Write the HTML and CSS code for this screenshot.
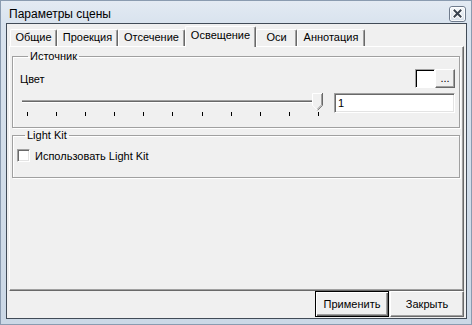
FILE: index.html
```html
<!DOCTYPE html>
<html>
<head>
<meta charset="utf-8">
<link rel="stylesheet" href="styles.css">
</head>
<body>
<div class="window">
  <div class="titlebar">
    <span class="title">Параметры сцены</span>
    <span class="close">
      <svg width="17" height="16" viewBox="0 0 17 16">
        <defs>
          <linearGradient id="cg" x1="0" y1="0" x2="0" y2="1">
            <stop offset="0" stop-color="#f4f7fb"/>
            <stop offset="1" stop-color="#d3dce8"/>
          </linearGradient>
        </defs>
        <rect x="0.5" y="0.5" width="16" height="15" rx="2.5" fill="url(#cg)" stroke="#6f7b8c"/>
        <rect x="1.5" y="1.5" width="14" height="13" rx="1.5" fill="none" stroke="#ffffff" stroke-opacity="0.8"/>
        <path d="M5.5 4.5 L11.5 10.5 M11.5 4.5 L5.5 10.5" stroke="#ffffff" stroke-width="4" stroke-linecap="square"/>
        <path d="M5.5 4.5 L11.5 10.5 M11.5 4.5 L5.5 10.5" stroke="#3a4350" stroke-width="2" stroke-linecap="square"/>
      </svg>
    </span>
  </div>
  <div class="client">
    <div class="tabstrip">
      <div class="tab w1">Общие</div>
      <div class="tab w2">Проекция</div>
      <div class="tab w3">Отсечение</div>
      <div class="tab w4 active">Освещение</div>
      <div class="tab w5">Оси</div>
      <div class="tab w6">Аннотация</div>
    </div>
    <div class="panel">
      <fieldset class="group source">
        <legend>Источник</legend>
        <div class="color-row">
          <span class="label">Цвет</span>
          <span class="picker">
            <span class="swatch"></span>
            <span class="dots">...</span>
          </span>
        </div>
        <div class="slider-row">
          <div class="slider">
            <div class="track"></div>
            <div class="ticks">
              <i></i><i></i><i></i><i></i><i></i><i></i><i></i><i></i><i></i><i></i><i></i>
            </div>
            <svg class="thumb" width="11" height="18" viewBox="0 0 11 18">
              <path d="M0 0 H11 V12 L5.5 17.5 L0 12 Z" fill="#f0f0f0"/>
              <path d="M0.5 12.5 V0.5 H10" stroke="#ffffff" fill="none"/>
              <path d="M10.5 0 V12.3 L5.5 17.3" stroke="#696969" fill="none"/>
              <path d="M9.5 1 V11.9 L5.5 15.9" stroke="#a0a0a0" fill="none"/>
              <path d="M0.5 12.3 L5 16.8" stroke="#ffffff" fill="none"/>
            </svg>
          </div>
          <div class="edit">1</div>
        </div>
      </fieldset>
      <fieldset class="group kit">
        <legend>Light Kit</legend>
        <label class="check"><span class="box"></span>Использовать Light Kit</label>
      </fieldset>
    </div>
    <div class="buttons">
      <span class="btn default">Применить</span>
      <span class="btn">Закрыть</span>
    </div>
  </div>
</div>
</body>
</html>
```
FILE: styles.css
```css
html, body {
  margin: 0;
  padding: 0;
}
body {
  width: 472px;
  height: 325px;
  font: 11px "Liberation Sans", Arial, sans-serif;
  color: #000;
  overflow: hidden;
}
.window {
  box-sizing: border-box;
  width: 472px;
  height: 325px;
  border: 1px solid #8a9bb0;
  background: linear-gradient(to bottom, #e3eaf3 0px, #d9e3ee 22px, #cbd8e6 100%);
  display: flex;
  flex-direction: column;
  padding: 0 4px 5px 5px;
}
.titlebar {
  height: 22px;
  display: flex;
  justify-content: space-between;
  align-items: flex-start;
}
.title {
  font-size: 12px;
  line-height: 14px;
  margin: 6px 0 0 3px;
  color: #000;
}
.close {
  display: block;
  width: 17px;
  height: 16px;
  margin: 5px 1px 0 0;
}
.close svg { display: block; }
.client {
  flex: 1;
  border: 1px solid #414b57;
  background: #f0f0f0;
  display: flex;
  flex-direction: column;
  padding: 0 2px 0 2px;
}
.tabstrip {
  height: 22px;
  display: flex;
  align-items: flex-end;
  padding-left: 1px;
  position: relative;
  z-index: 1;
}
.tab {
  box-sizing: border-box;
  height: 17px;
  border-top: 1px solid #fff;
  border-left: 1px solid #fff;
  border-right: 1px solid #696969;
  box-shadow: inset -1px 0 0 #a0a0a0;
  border-radius: 2px 2px 0 0;
  text-align: center;
  line-height: 15px;
  background: #f0f0f0;
}
.tab.active {
  height: 21px;
  margin-bottom: -1px;
  line-height: 17px;
}
.w1 { width: 47px; }
.w2 { width: 61px; }
.w3 { width: 67px; }
.w4 { width: 71px; }
.w5 { width: 41px; }
.w6 { width: 68px; }
.panel {
  box-sizing: border-box;
  height: 245px;
  border-top: 1px solid #fff;
  border-left: 1px solid #fff;
  border-right: 1px solid #696969;
  border-bottom: 1px solid #696969;
  box-shadow: inset -1px -1px 0 #a0a0a0;
  padding: 3px 3px 0 2px;
}
.group {
  margin: 0;
  padding: 0 4px 0 7px;
  border: 1px solid #a0a0a0;
  box-shadow: inset 1px 1px 0 #fff, 1px 1px 0 #fff;
  min-width: 0;
}
.group legend {
  margin-left: 8px;
  padding: 0 2px;
  line-height: 13px;
}
.source { padding-bottom: 14px; }
.color-row {
  display: flex;
  justify-content: space-between;
  align-items: center;
  margin-top: 6px;
  height: 19px;
}
.picker { display: flex; }
.swatch {
  box-sizing: border-box;
  width: 20px;
  height: 19px;
  background: #fff;
  border-top: 1px solid #a0a0a0;
  border-left: 1px solid #a0a0a0;
  border-right: 1px solid #fff;
  border-bottom: 1px solid #fff;
  box-shadow: inset 1px 1px 0 #000;
}
.dots {
  box-sizing: border-box;
  width: 20px;
  height: 19px;
  border-top: 1px solid #fff;
  border-left: 1px solid #fff;
  border-right: 1px solid #696969;
  border-bottom: 1px solid #696969;
  box-shadow: inset -1px -1px 0 #a0a0a0;
  text-align: center;
  line-height: 17px;
  letter-spacing: 0px;
}
.slider-row {
  display: flex;
  justify-content: space-between;
  margin-top: 5px;
  height: 20px;
}
.slider {
  position: relative;
  width: 301px;
  height: 20px;
  margin-left: 2px;
}
.track {
  margin-top: 7px;
  width: 296px;
  height: 1px;
  border-top: 1px solid #a0a0a0;
  border-bottom: 1px solid #fff;
  background: #696969;
}
.ticks {
  display: flex;
  justify-content: space-between;
  margin: 9px 0 0 5px;
  width: 292px;
}
.ticks i {
  display: block;
  width: 1px;
  height: 4px;
  background: #000;
}
.thumb {
  position: absolute;
  left: 290px;
  top: 0;
  display: block;
}
.edit {
  box-sizing: border-box;
  width: 121px;
  height: 20px;
  background: #fff;
  border-top: 1px solid #a0a0a0;
  border-left: 1px solid #a0a0a0;
  border-right: 1px solid #fff;
  border-bottom: 1px solid #fff;
  box-shadow: inset 1px 1px 0 #696969, inset -1px -1px 0 #e3e3e3;
  padding-left: 3px;
  line-height: 18px;
}
.kit {
  margin-top: 1px;
  padding-left: 4px;
  padding-bottom: 15px;
}
.check {
  display: flex;
  align-items: center;
  margin-top: 7px;
  height: 13px;
}
.box {
  box-sizing: border-box;
  width: 13px;
  height: 13px;
  background: #fff;
  border-top: 1px solid #a0a0a0;
  border-left: 1px solid #a0a0a0;
  border-right: 1px solid #fff;
  border-bottom: 1px solid #fff;
  box-shadow: inset 1px 1px 0 #696969, inset -1px -1px 0 #e3e3e3;
  margin-right: 5px;
}
.buttons {
  flex: 1;
  display: flex;
  justify-content: flex-end;
  gap: 1px;
  padding-top: 0;
}
.btn {
  box-sizing: border-box;
  width: 74px;
  height: 26px;
  border-top: 1px solid #fff;
  border-left: 1px solid #fff;
  border-right: 1px solid #696969;
  border-bottom: 1px solid #696969;
  box-shadow: inset -1px -1px 0 #a0a0a0;
  display: flex;
  align-items: center;
  justify-content: center;
  font-size: 11px;
}
.btn.default {
  border: 1px solid #000;
  box-shadow: inset 1px 1px 0 #fff, inset -1px -1px 0 #696969, inset -2px -2px 0 #a0a0a0;
}
```
